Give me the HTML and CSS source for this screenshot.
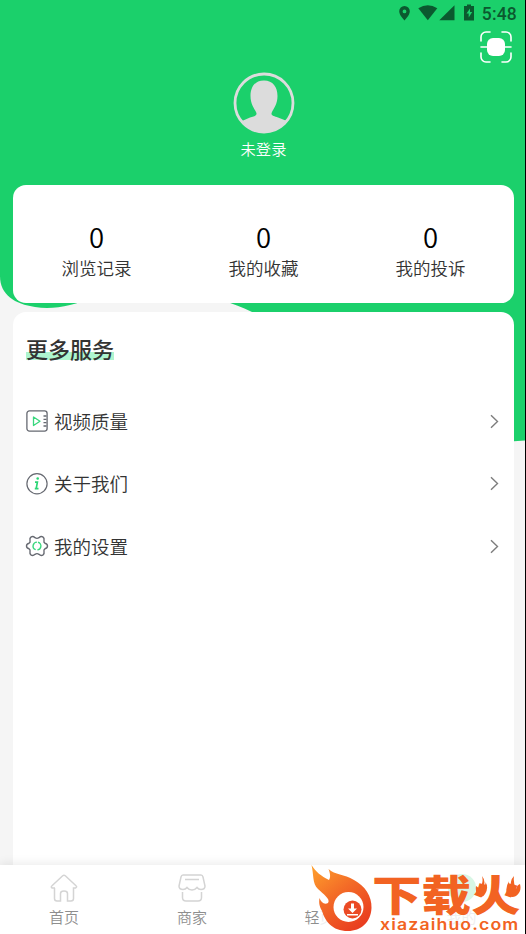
FILE: index.html
```html
<!DOCTYPE html>
<html lang="zh-CN">
<head>
<meta charset="utf-8">
<title>我的</title>
<link rel="stylesheet" href="styles.css">
</head>
<body>
<div class="app">
  <svg class="backdrop" viewBox="0 0 525 442" width="525" height="442" aria-hidden="true">
    <path fill="#1bd06b" d="M0 0H525V440.500L514 441.300C455 438 405 411 365 376C325 342 293 326 252 312C242 307 232 303 222 301C195 296 165 290 130 292C105 294 85 301 70 305C58 308 46 309 35 307C15 304 0 295 0 276Z"/>
  </svg>
  <div class="status">
    <svg width="76" height="18" viewBox="0 0 76 18" fill="#0b592f">
      <path fill-rule="evenodd" d="M6.500 1a5.300 5.300 0 0 0-5.300 5.300c0 4 5.300 9.200 5.300 9.200s5.300-5.200 5.300-9.200a5.300 5.300 0 0 0-5.300-5.300zm0 3.500a1.900 1.900 0 1 1 0 3.800 1.900 1.900 0 0 1 0-3.800z"/>
      <path d="M20.300 3.300Q29.800-3 39.300 3.300L29.800 15.300Z"/>
      <path d="M56.500 .3V15.300H41.300Z"/>
      <path fill-rule="evenodd" d="M69-.5h4v1.500h3V15.500H66V1h3zM72 3.500l-3.500 5h2.200v4l3.500-5.500H72z"/>
    </svg>
    <span class="clock">5:48</span>
  </div>
  <div class="scan">
    <svg width="34" height="34" viewBox="0 0 34 34" fill="none" stroke="#fff" stroke-width="1.600" stroke-linecap="round">
      <path d="M2 11V7a5 5 0 0 1 5-5h4M23 2h4a5 5 0 0 1 5 5v4M32 23v4a5 5 0 0 1-5 5h-4M11 32H7a5 5 0 0 1-5-5v-4M2 17h30" />
      <rect x="8" y="8" width="18" height="18" rx="6" fill="#fff" stroke="none"/>
    </svg>
  </div>
  <div class="profile">
    <svg width="62" height="62" viewBox="0 0 62 62">
      <defs><clipPath id="face"><circle cx="31" cy="31" r="29.500"/></clipPath></defs>
      <circle cx="31" cy="31" r="29" fill="none" stroke="#dcdcdc" stroke-width="2.800"/>
      <path clip-path="url(#face)" fill="#dcdcdc" d="M31 8.500C22 8.500 17.500 15 17.500 24C17.500 32 21 36 23 40C25 44 21 44 17 45.500L9 49V62H54V49L45 45.500C41 44 37 44 39 40C41 36 44.500 32 44.500 24C44.500 15 40 8.500 31 8.500Z"/>
    </svg>
    <span class="name">未登录</span>
  </div>
  <section class="stats">
    <div class="stat"><b>0</b><span>浏览记录</span></div>
    <div class="stat"><b>0</b><span>我的收藏</span></div>
    <div class="stat"><b>0</b><span>我的投诉</span></div>
  </section>
  <section class="services">
    <h2><span>更多服务</span></h2>
    <div class="row">
      <svg class="icon" viewBox="0 0 22 22" fill="none" stroke="#666971" stroke-width="1.300">
        <rect x=".9" y=".9" width="20.200" height="20.200" rx="2.500"/>
        <path d="M17.500 6h3M17.500 9.300h3M17.500 12.600h3M17.500 16h3"/>
        <path stroke="#38d77d" stroke-linejoin="round" d="M7.500 7v8.500l6.500-4.300z"/>
      </svg>
      <span class="label">视频质量</span>
      <svg class="arrow" viewBox="0 0 9 15"><path d="M1 1.200 7.500 7.500 1 13.800"/></svg>
    </div>
    <div class="row">
      <svg class="icon" viewBox="0 0 22 22" fill="none" stroke="#666971" stroke-width="1.200">
        <circle cx="11" cy="10.700" r="10.100"/>
        <circle cx="11.700" cy="5.500" r="1.300" fill="#2bd575" stroke="none"/>
        <path stroke="#2bd575" stroke-width="1.700" d="M9 9.200h2.400l-1.200 6.500h2.300M8.800 15.700h1.500"/>
      </svg>
      <span class="label">关于我们</span>
      <svg class="arrow" viewBox="0 0 9 15"><path d="M1 1.200 7.500 7.500 1 13.800"/></svg>
    </div>
    <div class="row">
      <svg class="icon" viewBox="0 0 22 22" fill="none" stroke="#666971" stroke-width="1.400">
        <path d="M18.900 8.200Q21.500 8.900 21.500 11Q21.500 13.100 18.900 13.800Q17.500 14.700 18 16.400Q18.600 18.900 16.800 20.100Q14.900 21.100 13 19.300Q11 18 9 19.300Q7.100 21.100 5.200 20.100Q3.400 18.900 4 16.400Q4.500 14.700 3.100 13.800Q.5 13.100 .5 11Q.5 8.900 3.100 8.200Q4.500 7.300 4 5.600Q3.400 3.100 5.200 1.900Q7.100 .9 9 2.700Q11 4 13 2.700Q14.900 .9 16.800 1.900Q18.600 3.100 18 5.600Q17.500 7.300 18.900 8.200Z"/>
        <circle cx="11" cy="11" r="3.900" stroke="#38d77d" stroke-dasharray="10.500 1.750" transform="rotate(-75 11 11)"/>
      </svg>
      <span class="label">我的设置</span>
      <svg class="arrow" viewBox="0 0 9 15"><path d="M1 1.200 7.500 7.500 1 13.800"/></svg>
    </div>
  </section>
  <nav class="tabs">
    <div class="tab">
      <svg width="28" height="28" viewBox="0 0 28 28"><path d="M5 14H2.200Q.5 13 2 11.700L12.700 1.800Q14 .7 15.300 1.800L26 11.700Q27.500 13 25.500 14H23.500V24.500Q23.500 27 21 27H17.500V19.500Q17.500 17 14 17T10.500 19.500V27H7Q4.500 27 4.500 24.500V14"/></svg>
      <span>首页</span>
    </div>
    <div class="tab">
      <svg width="28" height="28" viewBox="0 0 28 28"><path d="M5 1H23Q24.500 1 25 3L27 12Q27 15.500 23 15.500Q20.500 15.500 19 13.500Q17 16 14 16T9 13.500Q7.500 15.500 5 15.500Q1 15.500 1 12L3 3Q3.500 1 5 1M7 5.500H21M4.500 18V23.500Q4.500 27 8 27H20Q23.500 27 23.500 23.500V18"/></svg>
      <span>商家</span>
    </div>
    <div class="tab">
      <svg width="28" height="28"></svg>
      <span>轻<i>页面</i></span>
    </div>
    <div class="tab me">
      <svg width="28" height="28" viewBox="0 0 28 28"><circle cx="14" cy="14" r="14"/></svg>
      <span>我的</span>
    </div>
  </nav>
  <div class="brand">
    <svg class="flame" width="62" height="67" viewBox="0 0 62 67">
      <defs><linearGradient id="fire" x1="0" y1="0" x2=".7" y2="1"><stop offset="0" stop-color="#ffa22c"/><stop offset=".5" stop-color="#f36a27"/><stop offset="1" stop-color="#e93e20"/></linearGradient></defs>
      <path fill="url(#fire)" d="M.5 0C5 7 10 11 18 15C20 12 19 8 17.500 4C24 10 33 9 43 15C54 21 61 31 60.500 43C60 57 50 66 37 66C21 66 14 56 11 46C9 42 7.500 39 8.500 33C10 37 13 40 17 38C20 34 12 29 7 24C1 18 3 10 .5 0Z"/>
      <circle cx="37.500" cy="42" r="15" fill="#fff"/>
      <circle cx="41.500" cy="44.500" r="9" fill="#eb4a25"/>
      <path fill="#fff" d="M40 38.500h3v5h3l-4.500 4.500-4.500-4.500h3zM36 49h11v1.600H36z"/>
    </svg>
    <div class="wordmark">
      <div class="brand-name">下载火</div>
      <div class="brand-url">xiazaihuo.com</div>
    </div>
    <svg class="sparks" width="46" height="24" viewBox="0 0 46 24" fill="#f26322"><path d="M6 0Q10 5 7.500 10Q10 9 9.500 6Q13 12 9 18Q7 22 3 20Q-1 17 0 10Q2 11 3 13Q8 7 6 0ZM38 0Q33 5 36 10Q32 9 33 5Q29 12 31 17Q34 23 40 20Q46 16 44 8Q41 9 40 13Q37 7 38 0Z"/></svg>
  </div>
</div>
</body>
</html>
```
FILE: styles.css
```css
* { box-sizing: border-box; }
body {
  margin: 0;
  background: #000;
  font-family: "Noto Sans CJK SC", sans-serif;
  font-weight: 350;
  color: #333;
}
.app {
  position: relative;
  isolation: isolate;
  width: 525px;
  height: 934px;
  overflow: hidden;
  display: flex;
  flex-direction: column;
  background: #f5f5f5;
}
svg { display: block; flex: none; overflow: visible; }
.backdrop { position: absolute; top: 0; left: 0; z-index: -1; }
.status {
  height: 28px;
  padding: 5px 8px 0 0;
  display: flex;
  justify-content: flex-end;
  gap: 8px;
}
.clock {
  font: 500 17.500px/18px Roboto, sans-serif;
  color: #0b592f;
  letter-spacing: .2px;
}
.scan { height: 44px; padding: 2px 12px 0 0; display: flex; justify-content: flex-end; }
.profile {
  height: 113px;
  display: flex;
  flex-direction: column;
  align-items: center;
  padding-left: 2px;
}
.name { font-size: 15.300px; line-height: 22px; color: #fff; margin-top: 3px; }
.stats {
  height: 118px;
  margin: 0 11px 9px 13px;
  border-radius: 13px;
  background: #fff;
  display: grid;
  grid-template-columns: repeat(3, 1fr);
  padding-top: 33px;
}
.stat { display: flex; flex-direction: column; align-items: center; }
.stat b { font-size: 27.500px; line-height: 36px; font-weight: 350; color: #000; }
.stat span { font-size: 17.500px; line-height: 28px; }
.services {
  flex: 1;
  margin: 0 11px 0 13px;
  padding: 20px 15px 0 13px;
  border-radius: 13px 13px 0 0;
  background: #fff;
}
h2 { margin: 0 0 26px; font-size: 22px; line-height: 32px; font-weight: 500; }
h2 span {
  background: linear-gradient(#aef5cf, #aef5cf) 0 20px / 100% 8px no-repeat;
  display: inline-block;
}
.row { height: 62.500px; display: flex; align-items: center; font-size: 18.500px; }
.label { padding-bottom: 1px; }
.icon { width: 22px; height: 22px; margin-right: 6px; }
.arrow { width: 9px; height: 15px; margin-left: auto; fill: none; stroke: #7d7d7d; stroke-width: 1.400; }
.tabs {
  height: 69px;
  background: #fff;
  box-shadow: 0 -2px 9px rgba(0, 0, 0, .08);
  display: grid;
  grid-template-columns: 128px 128px 142px 1fr;
}
.tab {
  display: flex;
  flex-direction: column;
  align-items: center;
  padding-top: 9px;
  font-size: 15px;
  line-height: 22px;
  color: #8e8e8e;
}
.tab svg { fill: none; stroke: #d4d4d4; stroke-width: 1.500; margin-bottom: 4px; }
.tab i { font-style: normal; color: #eee; }
.me { color: #eee; }
.me svg { fill: #d8f6e5; stroke: none; }
.brand { position: absolute; left: 311px; top: 865px; display: flex; }
.wordmark { width: 152px; height: 69px; color: #f26322; }
.brand-name {
  height: 52px;
  font-size: 49.500px;
  line-height: 52px;
  font-weight: 900;
  white-space: nowrap;
  transform: translate(-1px, 2px) scaleY(.86);
  transform-origin: 0 50%;
}
.brand-url {
  padding: 1px 0 0 7px;
  font: 600 15.500px/14px Inter, sans-serif;
  letter-spacing: 1px;
  white-space: nowrap;
  transform: scaleX(1.140);
  transform-origin: 7px 0;
}
.sparks { position: absolute; left: 165px; top: 11px; }
```
